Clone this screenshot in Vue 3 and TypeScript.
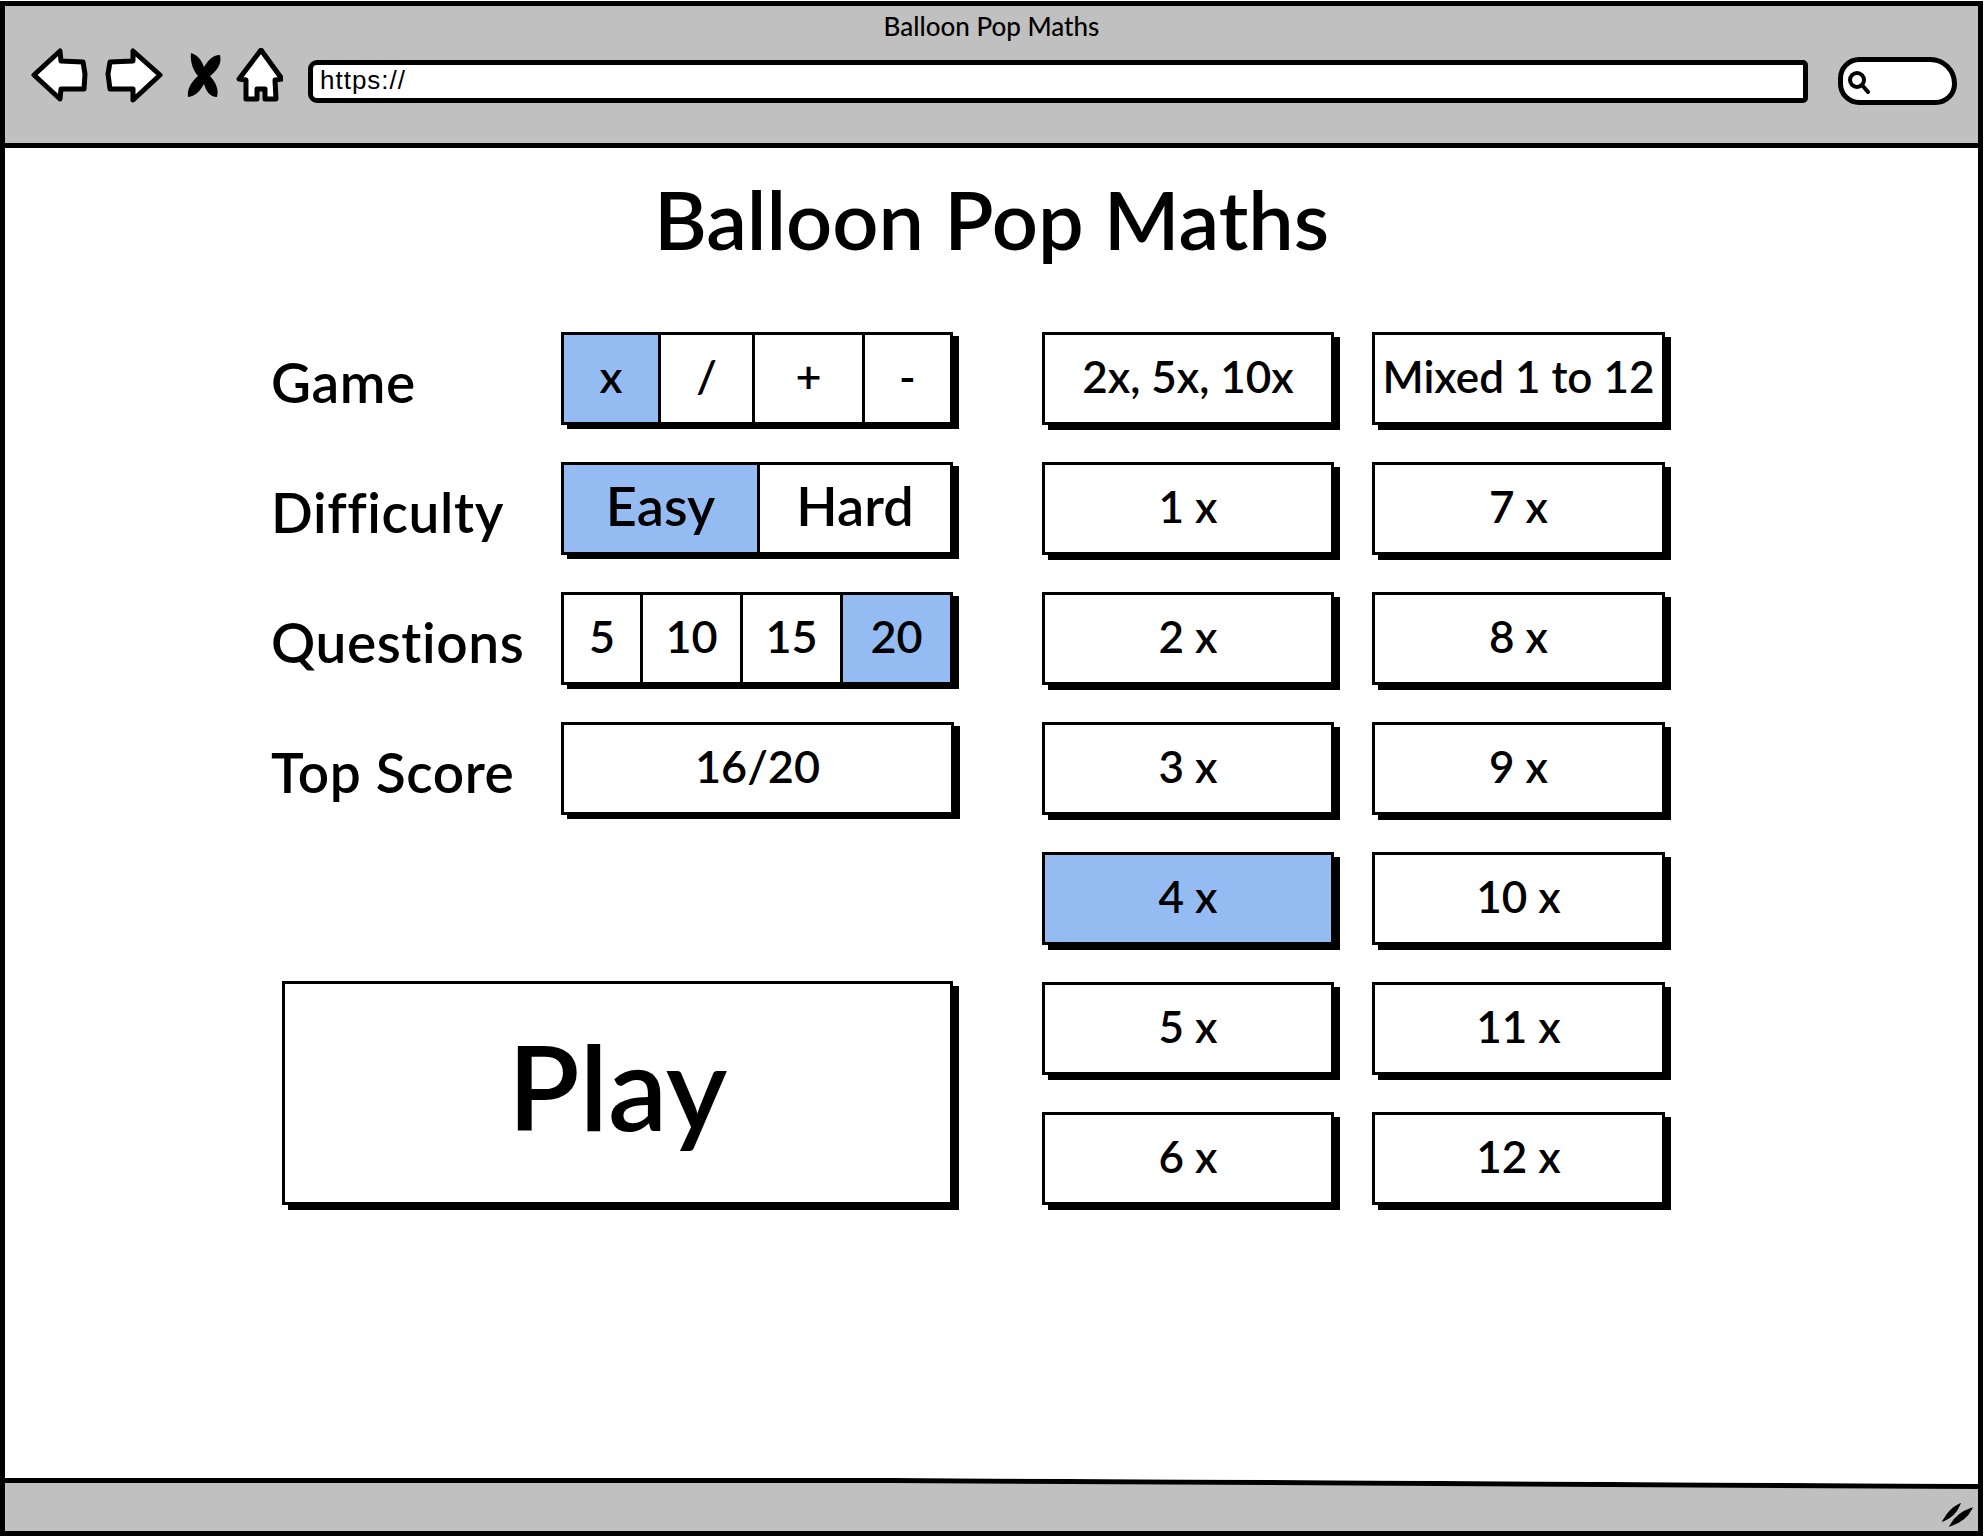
<script setup lang="ts">
import { ref } from 'vue'

const games = ['x', '/', '+', '-']
const levels = ['Easy', 'Hard']
const counts = ['5', '10', '15', '20']
const tables = [
  '2x, 5x, 10x',
  'Mixed 1 to 12',
  '1 x',
  '7 x',
  '2 x',
  '8 x',
  '3 x',
  '9 x',
  '4 x',
  '10 x',
  '5 x',
  '11 x',
  '6 x',
  '12 x',
]

const game = ref('x')
const level = ref('Easy')
const count = ref('20')
const table = ref('4 x')
</script>

<template>
  <div class="browser">
    <header class="chrome">
      <div class="page-name">Balloon Pop Maths</div>
      <div class="toolbar">
        <svg class="nav-icon" width="252" height="58" viewBox="0 0 252 58">
          <path class="arrow" d="M3 27 L29 3 L30 13 L52 14 L54 26 L53 41 L30 41 L29 51 Z" />
          <path class="arrow" d="M129 27 L102 3 L102 13 L79 14 L77 26 L79 41 L102 41 L102 52 Z" />
          <path
            class="cross"
            d="M160 5 C167 7 171 13 173 19 C177 13 181 7 189 7 C191 15 187 22 179 28 C185 35 188 41 186 49 C179 49 175 43 173 36 C169 43 165 48 157 49 C156 41 160 34 167 28 C162 22 159 14 160 5 Z"
          />
          <path
            class="arrow"
            d="M232 2 L253 31 L246 32 L247 51 L236 51 L236 41 L228 41 L228 51 L217 51 L217 32 L210 31 Z"
            transform="translate(-2 0)"
          />
        </svg>
        <div class="url">https://</div>
        <div class="search">
          <svg width="24" height="24" viewBox="0 0 24 24">
            <circle cx="10" cy="10" r="7" fill="none" stroke="#000" stroke-width="4" />
            <path d="M15 15 L21 22" stroke="#000" stroke-width="4" stroke-linecap="round" />
          </svg>
        </div>
      </div>
    </header>

    <main class="page">
      <h1 class="title">Balloon Pop Maths</h1>
      <div class="board">
        <section class="settings">
          <div class="row">
            <span class="label">Game</span>
            <div class="group game">
              <div
                v-for="item in games"
                :key="item"
                class="seg"
                :class="{ on: game === item }"
                @click="game = item"
              >
                {{ item }}
              </div>
            </div>
          </div>
          <div class="row">
            <span class="label">Difficulty</span>
            <div class="group level">
              <div
                v-for="item in levels"
                :key="item"
                class="seg"
                :class="{ on: level === item }"
                @click="level = item"
              >
                {{ item }}
              </div>
            </div>
          </div>
          <div class="row">
            <span class="label">Questions</span>
            <div class="group count">
              <div
                v-for="item in counts"
                :key="item"
                class="seg"
                :class="{ on: count === item }"
                @click="count = item"
              >
                {{ item }}
              </div>
            </div>
          </div>
          <div class="row">
            <span class="label">Top Score</span>
            <div class="group score">16/20</div>
          </div>
          <div class="play">Play</div>
        </section>

        <section class="tables">
          <div
            v-for="item in tables"
            :key="item"
            class="table-btn"
            :class="{ on: table === item }"
            @click="table = item"
          >
            {{ item }}
          </div>
        </section>
      </div>
    </main>

    <footer class="status">
      <svg width="32" height="24" viewBox="0 0 32 24">
        <path d="M3 17 C7 10 12 5 18 2 C15 9 10 14 3 17 Z" stroke="#000" stroke-width="2" />
        <path d="M10 22 C14 15 21 9 30 6 C26 14 19 19 10 22 Z" stroke="#000" stroke-width="2" />
      </svg>
    </footer>
  </div>
</template>

<style>
html,
body {
  margin: 0;
  background: #fff;
}
</style>

<style scoped>
.browser {
  box-sizing: border-box;
  width: 1983px;
  height: 1535px;
  margin-top: 1px;
  border: 5px solid #000;
  display: flex;
  flex-direction: column;
  color: #000;
  font-family: Lato, 'Noto Sans', sans-serif;
  font-weight: 600;
}

.chrome {
  height: 142px;
  box-sizing: border-box;
  background: #c0c0c0;
  border-bottom: 5px solid #000;
  display: flex;
  flex-direction: column;
}

.page-name {
  margin-top: 5px;
  text-align: center;
  font-size: 26px;
  line-height: 30px;
  font-weight: 500;
}

.toolbar {
  display: flex;
  align-items: center;
  margin-top: 10px;
  padding-left: 26px;
}

.nav-icon {
  flex: none;
  margin-right: 25px;
  margin-top: -3px;
}

.arrow {
  fill: #fff;
  stroke: #000;
  stroke-width: 5;
  stroke-linejoin: round;
}

.cross {
  fill: #000;
}

.url {
  width: 1500px;
  height: 43px;
  box-sizing: border-box;
  background: #fff;
  border: 5px solid #000;
  border-radius: 9px 5px 5px 9px;
  padding-left: 7px;
  font-family: 'Liberation Sans', sans-serif;
  font-weight: 400;
  font-size: 26px;
  letter-spacing: 1px;
  line-height: 31px;
  margin-top: 6px;
}

.search {
  width: 119px;
  height: 48px;
  box-sizing: border-box;
  margin-left: 30px;
  background: #fff;
  border: 5px solid #000;
  border-radius: 24px 30px 24px 24px;
  display: flex;
  align-items: center;
  padding-left: 4px;
  padding-top: 2px;
  margin-top: 5px;
}

.page {
  flex: 1;
  background: #fff;
}

.title {
  margin: 0;
  padding-top: 27px;
  font-size: 81px;
  line-height: 88px;
  font-weight: 600;
  text-align: center;
}

.board {
  display: flex;
  margin-top: 69px;
  padding-left: 266px;
}

.settings {
  width: 686px;
  flex: none;
  display: flex;
  flex-direction: column;
  gap: 36px;
}

.row {
  display: flex;
  align-items: center;
  height: 94px;
}

.label {
  width: 290px;
  font-size: 55px;
  letter-spacing: 0.6px;
  padding-top: 6px;
  flex: none;
}

.group {
  width: 392px;
  height: 93px;
  align-self: flex-start;
  box-sizing: border-box;
  border: 3px solid #000;
  box-shadow: 6px 4px 0 #000;
  display: flex;
  font-size: 45px;
}

.seg {
  box-sizing: border-box;
  display: flex;
  align-items: center;
  justify-content: center;
  padding-bottom: 6px;
  border-right: 3px solid #000;
  background: #fff;
}

.seg:last-child {
  border-right: 0;
  flex: 1;
}

.seg.on,
.table-btn.on {
  background: #94bbf2;
}

.game .seg:nth-child(1) {
  width: 97px;
}

.game .seg:nth-child(2) {
  width: 94px;
}

.game .seg:nth-child(3) {
  width: 110px;
}

.level {
  font-size: 54px;
}

.level .seg:first-child {
  width: 196px;
}

.count .seg:nth-child(1) {
  width: 79px;
}

.count .seg:nth-child(2),
.count .seg:nth-child(3) {
  width: 100px;
}

.score {
  width: 393px;
  align-items: center;
  justify-content: center;
  padding-bottom: 6px;
}

.play {
  width: 671px;
  height: 224px;
  box-sizing: border-box;
  margin: 129px 0 0 11px;
  border: 3px solid #000;
  box-shadow: 6px 5px 0 #000;
  display: flex;
  align-items: center;
  justify-content: center;
  font-size: 118px;
  padding-bottom: 16px;
}

.tables {
  margin-left: 85px;
  display: grid;
  grid-template-columns: 292px 293px;
  grid-auto-rows: 93px;
  column-gap: 38px;
  row-gap: 37px;
}

.table-btn {
  box-sizing: border-box;
  border: 3px solid #000;
  box-shadow: 6px 5px 0 #000;
  background: #fff;
  display: flex;
  align-items: center;
  justify-content: center;
  font-size: 44px;
  padding-bottom: 6px;
  white-space: nowrap;
}

.status {
  position: relative;
  height: 53px;
  box-sizing: border-box;
  background: #c0c0c0;
  clip-path: polygon(0 0, 45% 0, 100% 6px, 100% 100%, 0 100%);
  display: flex;
  align-items: flex-end;
  justify-content: flex-end;
  padding: 0 5px 4px 0;
}

.status::before {
  content: '';
  position: absolute;
  inset: 0;
  background: #000;
  clip-path: polygon(0 0, 45% 0, 100% 6px, 100% 11px, 45% 5px, 0 5px);
}
</style>
